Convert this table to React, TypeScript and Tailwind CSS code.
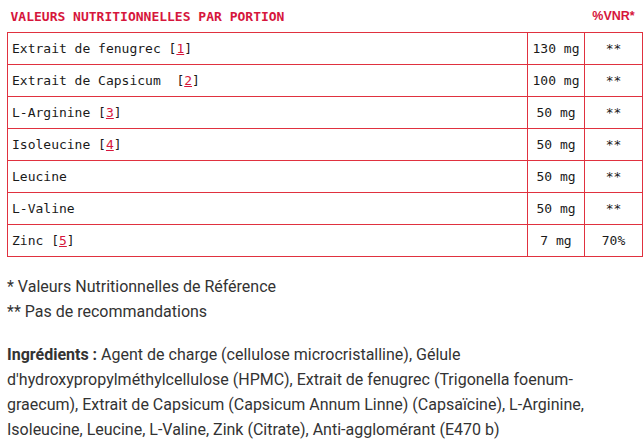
import React from 'react'

interface Row {
  name: string
  ref?: string
  gap?: boolean
  amount: string
  vnr: string
}

const rows: Row[] = [
  { name: 'Extrait de fenugrec', ref: '1', amount: '130 mg', vnr: '**' },
  { name: 'Extrait de Capsicum', ref: '2', gap: true, amount: '100 mg', vnr: '**' },
  { name: 'L-Arginine', ref: '3', amount: '50 mg', vnr: '**' },
  { name: 'Isoleucine', ref: '4', amount: '50 mg', vnr: '**' },
  { name: 'Leucine', amount: '50 mg', vnr: '**' },
  { name: 'L-Valine', amount: '50 mg', vnr: '**' },
  { name: 'Zinc', ref: '5', amount: '7 mg', vnr: '70%' },
]

const mono = "font-['DejaVu_Sans_Mono','Liberation_Mono',monospace]"

export default function App() {
  return (
    <div className="w-[643px] h-[447px] bg-white pl-[7px] overflow-hidden">
      {/* Nutrition table */}
      <table className={`w-[636px] border-collapse text-[13px] text-[#1a1a1a] ${mono}`}>
        <thead>
          <tr className="h-[32px]">
            <th className="text-left font-bold text-[#d6163c] pl-[3px] pt-[1px]">
              VALEURS NUTRITIONNELLES PAR PORTION
            </th>
            <th className="w-[57px]" />
            <th className="w-[58px] font-bold text-[#d6163c] text-[12.5px] font-['Liberation_Sans',sans-serif] text-center pt-[1px]">
              %VNR*
            </th>
          </tr>
        </thead>
        <tbody>
          {rows.map((row) => (
            <tr key={row.name} className="h-[32px]">
              <td className="border border-[#e0313f] pl-[4px] pt-[1px] whitespace-pre">
                {row.name}
                {row.ref && (
                  <>
                    {row.gap ? '  ' : ' '}[
                    <span className="text-[#d6163c] underline">{row.ref}</span>]
                  </>
                )}
              </td>
              <td className="border border-[#e0313f] pt-[1px] text-center">{row.amount}</td>
              <td className="border border-[#e0313f] pt-[1px] text-center">{row.vnr}</td>
            </tr>
          ))}
        </tbody>
      </table>

      {/* Footnotes */}
      <div className="mt-[17px] font-['Roboto',sans-serif] text-[16px] leading-[25px] text-[#333333]">
        <p>* Valeurs Nutritionnelles de Référence</p>
        <p>** Pas de recommandations</p>
        <p className="mt-[18px] pr-[20px]">
          <span className="font-bold">Ingrédients :</span> Agent de charge (cellulose microcristalline), Gélule
          d'hydroxypropylméthylcellulose (HPMC), Extrait de fenugrec (Trigonella foenum-graecum), Extrait de
          Capsicum (Capsicum Annum Linne) (Capsaïcine), L-Arginine, Isoleucine, Leucine, L-Valine, Zink (Citrate),
          Anti-agglomérant (E470 b)
        </p>
      </div>
    </div>
  )
}
